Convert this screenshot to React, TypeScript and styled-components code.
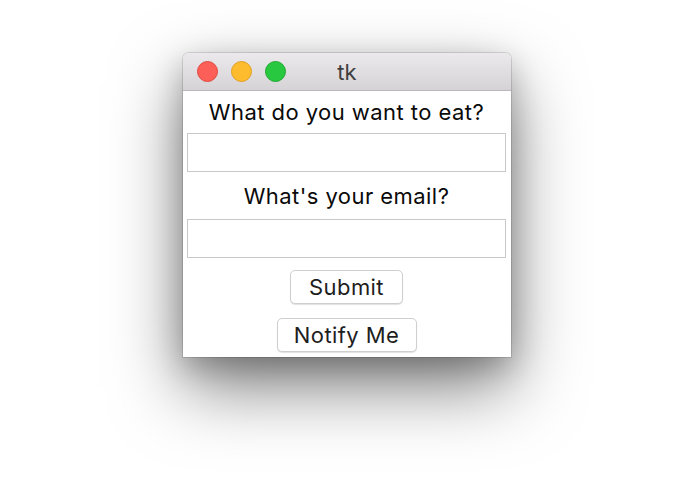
import React from 'react'
import styled, { createGlobalStyle } from 'styled-components'

const GlobalStyle = createGlobalStyle`
    html, body {
        margin: 0;
        padding: 0;
        background: #ffffff;
    }
    body {
        font-family: Inter, "Liberation Sans", Arial, sans-serif;
    }
`

const Stage = styled.div`
    width: 695px;
    height: 494px;
    display: flex;
    justify-content: center;
    align-items: flex-start;
    padding: 53px 1px 0 0;
    box-sizing: border-box;
`

const Window = styled.div`
    width: 328px;
    display: flex;
    flex-direction: column;
    border-radius: 6px 6px 0 0;
    background: #ffffff;
    box-shadow: 0 0 0 1px rgba(0, 0, 0, 0.12), 0 30px 70px rgba(0, 0, 0, 0.5), 0 10px 30px rgba(0, 0, 0, 0.22);
    overflow: hidden;
`

const TitleBar = styled.div`
    height: 37px;
    display: flex;
    align-items: center;
    position: relative;
    padding-left: 14px;
    background: linear-gradient(#ebe9eb, #d5d3d5);
    border-bottom: 1px solid #b9b7b9;
`

const Lights = styled.div`
    display: flex;
    gap: 13px;
`

const Light = styled.span<{ $fill: string; $edge: string }>`
    width: 21px;
    height: 21px;
    border-radius: 50%;
    box-sizing: border-box;
    background: ${props => props.$fill};
    border: 1px solid ${props => props.$edge};
`

const Title = styled.div`
    position: absolute;
    left: 0;
    right: 0;
    text-align: center;
    font-size: 22px;
    color: #3f3e3f;
    pointer-events: none;
`

const Body = styled.div`
    display: flex;
    flex-direction: column;
    align-items: center;
    padding: 0 5px 5px 4px;
`

const Label = styled.div<{ $height: number }>`
    height: ${props => props.$height}px;
    display: flex;
    align-items: center;
    justify-content: center;
    font-size: 22px;
    letter-spacing: 0.45px;
    color: #0a0a0a;
`

const Entry = styled.input`
    width: 100%;
    height: 39px;
    box-sizing: border-box;
    border: 1px solid #c9c9c9;
    background: #ffffff;
    outline: none;
    margin: 0;
`

const Button = styled.button<{ $width: number; $top: number }>`
    width: ${props => props.$width}px;
    height: 34px;
    margin-top: ${props => props.$top}px;
    box-sizing: border-box;
    border: 1px solid #cfcfcf;
    border-radius: 5px;
    background: #ffffff;
    box-shadow: 0 1px 1px rgba(0, 0, 0, 0.12);
    font-family: inherit;
    font-size: 22px;
    letter-spacing: 0.4px;
    color: #1e1e1e;
    padding: 0;
`

function App() {
    return (
        <>
            <GlobalStyle />
            <Stage>
                <Window>
                    <TitleBar>
                        <Lights>
                            <Light $fill="#fc5f57" $edge="#e2473f" />
                            <Light $fill="#fdbc2e" $edge="#e09f20" />
                            <Light $fill="#28c840" $edge="#1ea82e" />
                        </Lights>
                        <Title>tk</Title>
                    </TitleBar>
                    <Body>
                        <Label $height={42}>What do you want to eat?</Label>
                        <Entry />
                        <Label $height={47}>What's your email?</Label>
                        <Entry />
                        <Button $width={113} $top={12}>Submit</Button>
                        <Button $width={140} $top={14}>Notify Me</Button>
                    </Body>
                </Window>
            </Stage>
        </>
    )
}

export default App
